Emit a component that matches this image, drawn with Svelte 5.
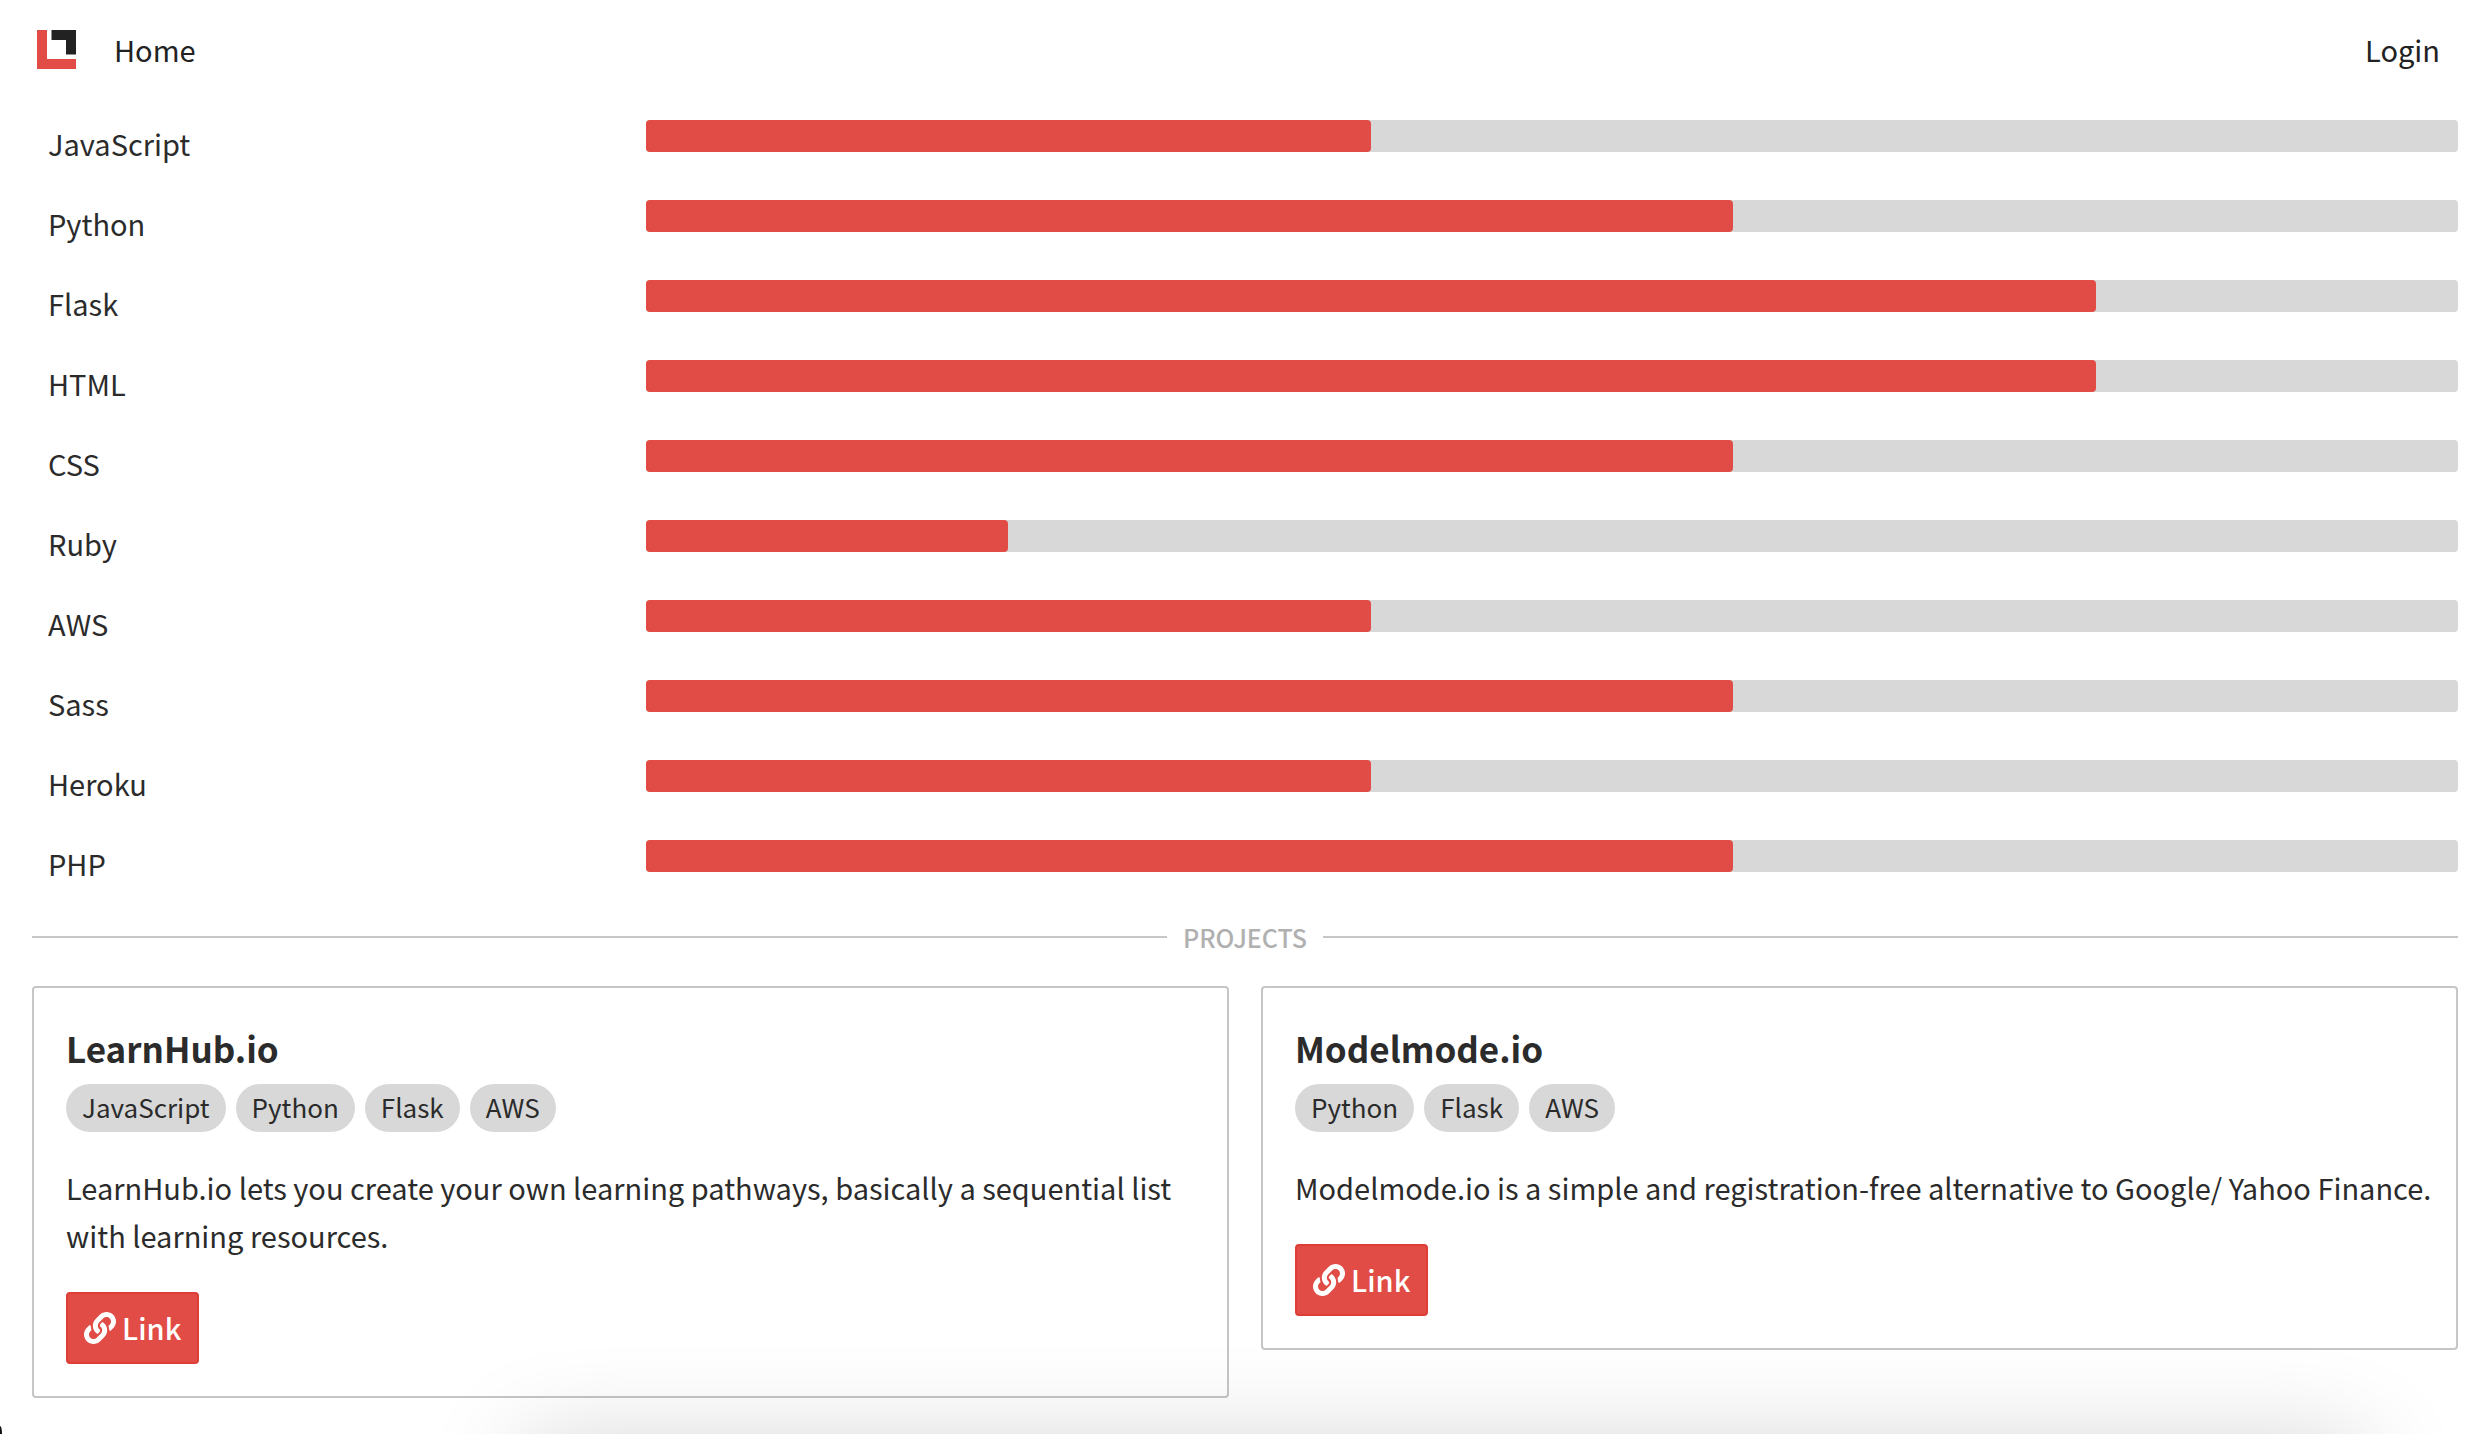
<script>
	let skills = [
		{ name: 'JavaScript', level: 2 },
		{ name: 'Python', level: 3 },
		{ name: 'Flask', level: 4 },
		{ name: 'HTML', level: 4 },
		{ name: 'CSS', level: 3 },
		{ name: 'Ruby', level: 1 },
		{ name: 'AWS', level: 2 },
		{ name: 'Sass', level: 3 },
		{ name: 'Heroku', level: 2 },
		{ name: 'PHP', level: 3 }
	];
	const maxLevel = 5;

	let projects = [
		{
			title: 'LearnHub.io',
			tags: ['JavaScript', 'Python', 'Flask', 'AWS'],
			text: 'LearnHub.io lets you create your own learning pathways, basically a sequential list with learning resources.'
		},
		{
			title: 'Modelmode.io',
			tags: ['Python', 'Flask', 'AWS'],
			text: 'Modelmode.io is a simple and registration-free alternative to Google/ Yahoo Finance.'
		}
	];
</script>

<header>
	<nav>
		<a class="logo" href="#top" aria-label="Logo">
			<svg viewBox="0 0 39 39">
				<path fill="#e14d46" d="M0 0h10v29h29v10H0z" />
				<path fill="#222" d="M14.500 0H39v24.500H29V10H14.500z" />
			</svg>
		</a>
		<a href="#home">Home</a>
	</nav>
	<a href="#login">Login</a>
</header>

<main>
	<section class="skills">
		{#each skills as { name, level } (name)}
			<div class="skill">
				<span class="name">{name}</span>
				<div class="bar" role="meter" aria-label={name} aria-valuemin="0" aria-valuemax={maxLevel} aria-valuenow={level}>
					<div class="fill" style="width: {(level / maxLevel) * 100}%"></div>
				</div>
			</div>
		{/each}
	</section>

	<h2 class="divider">PROJECTS</h2>

	<section class="projects">
		{#each projects as project (project.title)}
			<article>
				<h3>{project.title}</h3>
				<div class="tags">
					{#each project.tags as tag}
						<span class="chip">{tag}</span>
					{/each}
				</div>
				<p>{project.text}</p>
				<a class="btn" href="#link">
					<svg viewBox="0 0 512 512" aria-hidden="true">
						<path
							fill="currentColor"
							d="M326.612 185.391c59.747 59.809 58.927 155.698.36 214.59-.11.12-.24.25-.36.37l-67.2 67.2c-59.27 59.27-155.699 59.262-214.96 0-59.27-59.26-59.27-155.7 0-214.96l37.106-37.106c9.84-9.84 26.786-3.3 27.294 10.606.648 17.722 3.826 35.527 9.69 52.721 1.986 5.822.567 12.262-3.783 16.612l-13.087 13.087c-28.026 28.026-28.905 73.66-1.155 101.96 28.024 28.579 74.086 28.749 102.325.51l67.2-67.19c28.191-28.191 28.073-73.757 0-101.83-3.701-3.694-7.429-6.564-10.341-8.569a16.037 16.037 0 0 1-6.947-12.606c-.396-10.567 3.348-21.456 11.698-29.806l21.054-21.055c5.521-5.521 14.182-6.199 20.584-1.731a152.482 152.482 0 0 1 20.522 17.197zM467.547 44.449c-59.261-59.262-155.69-59.27-214.96 0l-67.2 67.2c-.12.12-.25.25-.36.37-58.566 58.892-59.387 154.781.36 214.59a152.454 152.454 0 0 0 20.521 17.196c6.402 4.468 15.064 3.789 20.584-1.731l21.054-21.055c8.35-8.35 12.094-19.239 11.698-29.806a16.037 16.037 0 0 0-6.947-12.606c-2.912-2.005-6.64-4.875-10.341-8.569-28.073-28.073-28.191-73.639 0-101.83l67.2-67.19c28.239-28.239 74.3-28.069 102.325.51 27.75 28.3 26.872 73.934-1.155 101.96l-13.087 13.087c-4.35 4.35-5.769 10.79-3.783 16.612 5.864 17.194 9.042 34.999 9.69 52.721.509 13.906 17.454 20.446 27.294 10.606l37.106-37.106c59.271-59.259 59.271-155.699.001-214.959z"
						/>
					</svg>
					<span>Link</span>
				</a>
			</article>
		{/each}
	</section>
</main>

<div class="shade"></div>
<div class="corner"></div>

<style>
	:global(body) {
		background: #fff;
		color: #2b2b2b;
		font-family: 'Noto Sans CJK SC', 'Open Sans', sans-serif;
		font-size: 29px;
		line-height: 48px;
		overflow: hidden;
	}
	a {
		color: #222;
		text-decoration: none;
	}
	header {
		display: flex;
		align-items: center;
		justify-content: space-between;
		height: 104px;
		box-sizing: border-box;
		padding: 0 48px 6px 37px;
	}
	nav {
		display: flex;
		align-items: center;
		gap: 38px;
	}
	.logo,
	.logo svg {
		display: block;
		width: 39px;
		height: 39px;
	}
	main {
		padding: 16px 30px 36px 32px;
	}
	.skills {
		display: grid;
		grid-auto-rows: 48px;
		gap: 32px;
	}
	.skill {
		display: grid;
		grid-template-columns: 1fr 3fr;
		gap: 10px;
	}
	.name {
		padding-left: 16px;
		line-height: 46px;
	}
	.bar {
		height: 32px;
		background: #d8d8d8;
		border-radius: 4px;
	}
	.fill {
		height: 100%;
		background: #e14d46;
		border-radius: 4px;
	}
	.divider {
		display: flex;
		align-items: center;
		gap: 16px;
		margin: 24px 0;
		color: #b0b0b0;
		font-size: 25px;
		font-weight: 500;
		line-height: 50px;
	}
	.divider::before,
	.divider::after {
		content: '';
		flex: 1;
		height: 2px;
		background: #c6c6c6;
	}
	.projects {
		display: grid;
		grid-template-columns: 1fr 1fr;
		align-items: start;
		gap: 32px;
	}
	article {
		padding: 32px 24px 32px 32px;
		border: 2px solid #c6c6c6;
		border-radius: 4px;
	}
	h3 {
		margin: 0 0 8px;
		font-size: 35px;
		font-weight: 600;
		line-height: 56px;
	}
	.tags {
		display: flex;
		gap: 10px;
	}
	.chip {
		padding: 0 16px 2px;
		border-radius: 24px;
		background: #d8d8d8;
		font-size: 26px;
		line-height: 46px;
	}
	p {
		margin: 31px 0 33px;
	}
	.btn {
		display: inline-flex;
		align-items: center;
		gap: 6px;
		padding: 10px 16px;
		border: 2px solid #dd3e37;
		border-radius: 4px;
		background: #e14d46;
		color: #fff;
		vertical-align: top;
	}
	.btn svg {
		width: 32px;
		height: 32px;
	}
	.btn span {
		padding-bottom: 2px;
		font-weight: 500;
		line-height: 46px;
	}
	/* soft shadow rising from the bottom edge */
	.shade {
		position: fixed;
		top: 100%;
		left: 21%;
		right: 5%;
		height: 200px;
		box-shadow: 0 10px 100px rgb(0 0 0 / 0.18);
		pointer-events: none;
	}
	/* dark sliver in the bottom left corner */
	.corner {
		position: fixed;
		bottom: 0;
		left: 0;
		width: 2px;
		height: 8px;
		border-top-right-radius: 2px 8px;
		background: #111;
	}
</style>
